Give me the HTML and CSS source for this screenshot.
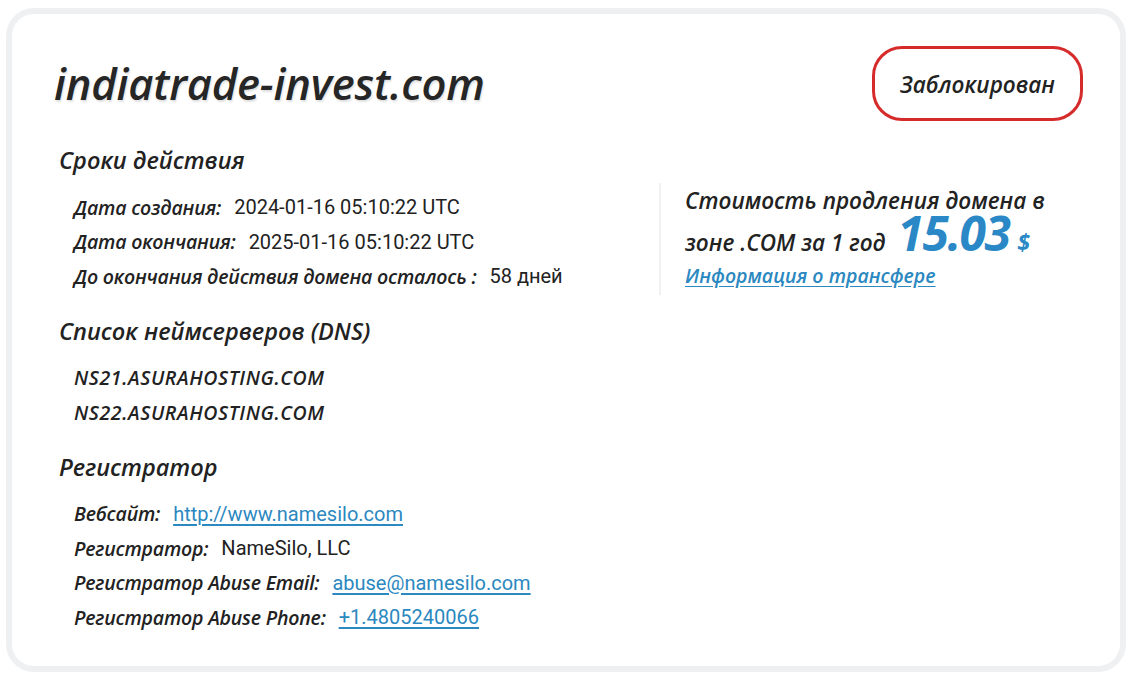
FILE: index.html
```html
<!DOCTYPE html>
<html lang="ru">
<head>
<meta charset="utf-8">
<link rel="stylesheet" href="styles.css">
</head>
<body>
<div class="card">
  <div class="head">
    <h1 class="domain">indiatrade-invest.com</h1>
    <div class="badge">Заблокирован</div>
  </div>
  <div class="cols">
    <div class="left">
      <h2 class="sec">Сроки действия</h2>
      <div class="rows">
        <div class="row"><span class="lbl">Дата создания:</span><span class="val">2024-01-16 05:10:22 UTC</span></div>
        <div class="row"><span class="lbl">Дата окончания:</span><span class="val">2025-01-16 05:10:22 UTC</span></div>
        <div class="row"><span class="lbl">До окончания действия домена осталось :</span><span class="val">58 дней</span></div>
      </div>
      <h2 class="sec">Список неймсерверов (DNS)</h2>
      <div class="rows">
        <div class="row"><span class="lbl ns">NS21.ASURAHOSTING.COM</span></div>
        <div class="row"><span class="lbl ns">NS22.ASURAHOSTING.COM</span></div>
      </div>
      <h2 class="sec">Регистратор</h2>
      <div class="rows">
        <div class="row"><span class="lbl">Вебсайт:</span><a class="val link" href="#">http://www.namesilo.com</a></div>
        <div class="row"><span class="lbl">Регистратор:</span><span class="val">NameSilo, LLC</span></div>
        <div class="row"><span class="lbl">Регистратор Abuse Email:</span><a class="val link" href="#">abuse@namesilo.com</a></div>
        <div class="row"><span class="lbl">Регистратор Abuse Phone:</span><a class="val link" href="#">+1.4805240066</a></div>
      </div>
    </div>
    <div class="right">
      <p class="price">Стоимость продления домена в зоне .COM за 1 год <span class="amount">15.03</span> <span class="cur">$</span></p>
      <a class="transfer" href="#">Информация о трансфере</a>
    </div>
  </div>
</div>
</body>
</html>
```
FILE: styles.css
```css
html, body {
  margin: 0;
  padding: 0;
  background: #ffffff;
}
body {
  padding: 8px 6px 6px 6px;
  font-family: "Open Sans", "DejaVu Sans", sans-serif;
  color: #222;
}
.card {
  box-sizing: border-box;
  height: 664px;
  border: 6px solid #eff0f1;
  border-radius: 28px;
  padding: 30px 37px 20px 41px;
}
.head {
  display: flex;
  justify-content: space-between;
  align-items: flex-start;
}
.domain {
  margin: 16px 0 0 1px;
  font-family: "Open Sans", sans-serif;
  font-style: italic;
  font-weight: 600;
  font-size: 43.5px;
  line-height: 48px;
  color: #262626;
  text-shadow: 1px 2px 2px rgba(0,0,0,0.12);
  letter-spacing: -0.2px;
}
.badge {
  margin-top: 2px;
  box-sizing: border-box;
  width: 211px;
  height: 75px;
  border: 3px solid #d62b2b;
  border-radius: 30px;
  display: flex;
  align-items: center;
  justify-content: center;
  font-family: "Open Sans", sans-serif;
  font-style: italic;
  font-weight: 600;
  font-size: 22.5px;
  color: #222;
  padding-top: 2px;
}
.cols {
  display: flex;
  margin-top: 22px;
}
.left {
  width: 606px;
}
.sec {
  margin: 0 0 0 6px;
  font-family: "Open Sans", sans-serif;
  font-style: italic;
  font-weight: 600;
  font-size: 23.5px;
  line-height: 34px;
  color: #222;
}
.rows {
  display: flex;
  flex-direction: column;
  padding: 13px 0 20px 21px;
}
.row {
  height: 34.5px;
  display: flex;
  align-items: center;
}
.lbl {
  font-family: "Open Sans", sans-serif;
  font-style: italic;
  font-weight: 600;
  font-size: 19.5px;
  color: #222;
  letter-spacing: -0.2px;
}
.ns {
  letter-spacing: 0.6px;
}
.val {
  margin-left: 13px;
  font-family: "Roboto", sans-serif;
  font-size: 20px;
  color: #222;
}
.link {
  color: #2b88c0;
  text-decoration: underline;
  text-underline-offset: 3px;
}
.right {
  margin-top: 40px;
  align-self: flex-start;
  border-left: 2px solid #f0f1f2;
  padding: 0 0 8px 24px;
  height: 104px;
}
.price {
  margin: 0;
  width: 390px;
  font-family: "Open Sans", sans-serif;
  font-style: italic;
  font-weight: 600;
  font-size: 22.5px;
  line-height: 35px;
  color: #222;
}
.amount {
  font-size: 48px;
  font-weight: 700;
  color: #2a88c6;
  margin-left: 6px;
  letter-spacing: -1.5px;
  line-height: 30px;
}
.cur {
  font-size: 23px;
  font-weight: 700;
  color: #2a88c6;
  margin-left: 2px;
}
.transfer {
  display: block;
  margin-top: 2px;
  font-family: "Open Sans", sans-serif;
  font-style: italic;
  font-weight: 600;
  font-size: 19.5px;
  color: #2b88c0;
  text-decoration: underline;
  text-underline-offset: 3px;
}
```
